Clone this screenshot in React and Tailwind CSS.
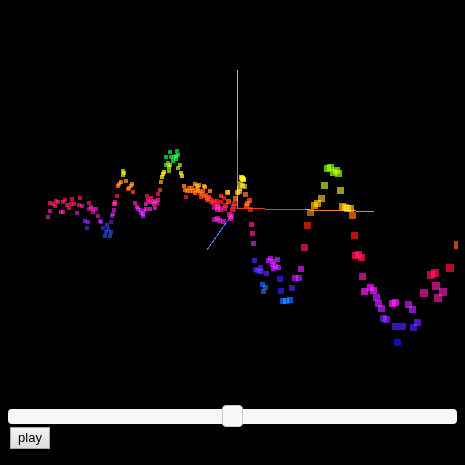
import { useState } from 'react';

// Each series: marker size, fill, and [x, y] centres on the 465 x 402 scene.
const series = [
  { size: 4, color: '#b81046', points: [[50,203],[53,204],[55,206],[56,201],[58,202],[63,202],[65,200],[67,205],[69,208],[72,199],[71,204],[74,204],[80,198],[79,205],[89,203]] },
  { size: 4, color: '#a8146e', points: [[50,211],[61,212],[63,212],[82,206],[91,207],[89,209],[93,209],[115,204]] },
  { size: 4, color: '#98148c', points: [[48,217],[77,213],[96,209],[93,212],[98,216],[114,210],[113,214]] },
  { size: 4, color: '#6418a8', points: [[85,221],[88,222],[100,221],[101,222],[112,216]] },
  { size: 4, color: '#361ca0', points: [[103,228],[111,222]] },
  { size: 4, color: '#1c2ca8', points: [[87,228],[107,225],[108,229],[106,232]] },
  { size: 4, color: '#153c9c', points: [[111,232],[105,236],[110,236]] },

  { size: 4, color: '#a0a414', points: [[123,171],[124,173],[123,175]] },
  { size: 4, color: '#b87414', points: [[126,181],[121,182],[132,184]] },
  { size: 4, color: '#c25a10', points: [[119,184],[118,186],[131,186],[129,188]] },
  { size: 4, color: '#c03410', points: [[128,189],[133,192],[160,190]] },
  { size: 4, color: '#b81438', points: [[117,196],[147,196],[158,194]] },
  { size: 4, color: '#c01468', points: [[115,202],[114,204],[148,200],[151,198],[150,202],[153,202],[155,201],[158,200],[157,203]] },
  { size: 4, color: '#b8149c', points: [[135,203],[146,204],[150,209],[146,209],[155,208],[154,204],[137,207]] },
  { size: 4, color: '#9016bc', points: [[138,209],[140,210],[141,213],[143,216],[143,214],[144,211]] },

  { size: 4, color: '#12a83a', points: [[170,152],[177,151],[166,157],[171,157]] },
  { size: 4, color: '#12b428', points: [[174,157],[176,156],[178,155],[176,159],[173,161]] },
  { size: 4, color: '#48a41a', points: [[166,165],[168,163]] },
  { size: 4, color: '#7ea814', points: [[169,167],[170,165],[180,165],[178,168],[169,171]] },
  { size: 4, color: '#bcba10', points: [[164,172],[163,174],[162,177],[181,173],[182,176]] },
  { size: 4, color: '#c27c10', points: [[161,182]] },

  { size: 4, color: '#c87410', points: [[184,186],[195,184],[197,186],[199,185],[204,186],[205,187],[210,191],[228,192]] },
  { size: 4, color: '#d85008', points: [[185,190],[187,191],[190,191],[192,188],[193,191],[195,193],[198,188],[198,191],[189,188],[196,190],[203,191]] },
  { size: 4, color: '#dc2c0c', points: [[200,193],[202,194],[204,196],[201,197],[206,195],[207,198],[209,197],[200,191],[221,196]] },
  { size: 4, color: '#d0141c', points: [[208,200],[211,199],[211,202],[214,201],[217,201],[217,204],[221,202],[207,200],[213,203]] },
  { size: 4, color: '#b81438', points: [[186,197],[224,198]] },
  { size: 5, color: '#b8105c', points: [[214,207],[217,209],[218,207],[220,209],[224,208],[217,206]] },
  { size: 5, color: '#a8109c', points: [[214,219],[217,218],[219,220],[223,221]] },

  { size: 5, color: '#cccc08', points: [[242,178],[241,177],[243,179]] },
  { size: 5, color: '#a88c10', points: [[240,183],[242,185],[244,186],[239,188]] },
  { size: 5, color: '#c88a08', points: [[237,192],[227,192],[239,191]] },
  { size: 5, color: '#b46010', points: [[245,194],[235,198]] },
  { size: 5, color: '#cc400c', points: [[249,200],[247,203],[246,205],[228,201]] },
  { size: 5, color: '#cc1420', points: [[250,209],[234,203],[233,206],[232,209],[225,205]] },
  { size: 5, color: '#b8106c', points: [[229,214],[231,216],[251,224],[252,233]] },
  { size: 5, color: '#9c12a4', points: [[230,218],[253,243]] },

  { size: 5, color: '#4c14a8', points: [[254,260],[260,267],[266,273]] },
  { size: 5, color: '#2814cc', points: [[255,269],[257,270],[259,271],[261,271]] },
  { size: 5, color: '#8c12c4', points: [[270,258],[268,260],[273,261],[277,259],[272,264],[275,266],[278,267],[273,268]] },
  { size: 5, color: '#104cac', points: [[262,284],[265,287],[263,291]] },
  { size: 6, color: '#2414b4', points: [[280,279],[281,291]] },
  { size: 6, color: '#4414a4', points: [[292,288]] },
  { size: 6, color: '#0a50d0', points: [[283,301],[286,301],[290,300]] },
  { size: 6, color: '#8412c0', points: [[295,278],[299,278]] },
  { size: 6, color: '#a012b0', points: [[301,269]] },

  { size: 7, color: '#b0104c', points: [[304,247]] },
  { size: 7, color: '#b41414', points: [[307,225],[354,235]] },
  { size: 7, color: '#b85410', points: [[310,212],[352,215]] },
  { size: 7, color: '#c47c08', points: [[314,205],[317,203],[342,206],[345,207],[347,208],[350,208]] },
  { size: 7, color: '#a08c14', points: [[321,198]] },
  { size: 7, color: '#94a012', points: [[324,185],[340,190]] },
  { size: 7, color: '#58b804', points: [[327,168],[330,167],[333,172],[336,170],[338,173]] },

  { size: 7, color: '#c80c38', points: [[355,255],[358,254],[361,257]] },
  { size: 7, color: '#ac1078', points: [[362,276]] },
  { size: 7, color: '#b810b8', points: [[364,291],[370,287],[373,290],[392,303],[395,302]] },
  { size: 7, color: '#8c12c0', points: [[376,297],[378,303],[381,308],[408,304],[412,309]] },
  { size: 7, color: '#5414b4', points: [[383,318],[386,319],[417,322]] },
  { size: 7, color: '#3814b0', points: [[395,326],[402,326],[413,327]] },
  { size: 7, color: '#1010ac', points: [[397,342]] },
  { size: 8, color: '#a81078', points: [[436,286],[443,292],[438,298],[424,293]] },
  { size: 8, color: '#b80c38', points: [[431,275],[435,273]] },
  { size: 8, color: '#b40c20', points: [[450,268]] },
];

function Scene() {
  return (
    <svg viewBox="0 0 465 402" className="block w-full" role="img" aria-label="3D particle plot">
      <g shapeRendering="crispEdges">
        <rect x="237" y="70" width="1" height="70" fill="#7ce04c" />
        <rect x="237" y="140" width="1" height="68" fill="#4cc824" />
        <path d="M237 208.4 L305 209.9" stroke="#e83c10" strokeWidth="1" />
        <path d="M305 209.9 L374 211.4" stroke="#f08418" strokeWidth="1" />
        <path d="M237 208 L226 223" stroke="#2828b0" strokeWidth="1" />
        <path d="M226 223 L207 250" stroke="#3880e0" strokeWidth="1" />
        {series.map(({ size, color, points }, s) => (
          <g key={s} fill={color}>
            {points.map(([x, y], i) => (
              <rect
                key={i}
                className="mix-blend-screen"
                x={x - Math.floor(size / 2)}
                y={y - Math.floor(size / 2)}
                width={size}
                height={size}
              />
            ))}
          </g>
        ))}
        <rect x="454" y="241" width="4" height="8" fill="#b44410" />
      </g>
    </svg>
  );
}

export default function App() {
  const [position, setPosition] = useState(50);
  const [playing, setPlaying] = useState(false);

  return (
    <main className="min-h-screen bg-black font-['Liberation_Sans',Arial,sans-serif]">
      <Scene />
      <div className="px-2 pt-1">
        <input
          type="range"
          min="0"
          max="100"
          value={position}
          aria-label="Position"
          onChange={(e) => setPosition(Number(e.target.value))}
          className="block h-[21px] w-full appearance-none bg-transparent [&::-webkit-slider-runnable-track]:h-[15px] [&::-webkit-slider-runnable-track]:rounded [&::-webkit-slider-runnable-track]:bg-[#f7f7f7] [&::-webkit-slider-thumb]:-mt-1 [&::-webkit-slider-thumb]:h-[22px] [&::-webkit-slider-thumb]:w-[21px] [&::-webkit-slider-thumb]:appearance-none [&::-webkit-slider-thumb]:rounded [&::-webkit-slider-thumb]:border [&::-webkit-slider-thumb]:border-[#c8c8c8] [&::-webkit-slider-thumb]:bg-[#f9f9f9]"
        />
        <button
          type="button"
          onClick={() => setPlaying(!playing)}
          className="mx-0.5 block h-[22px] w-10 border border-[#a8a8a8] bg-linear-to-b from-[#f4f4f4] to-[#dcdcdc] text-center text-[13px] leading-5 text-black"
        >
          {playing ? 'stop' : 'play'}
        </button>
      </div>
    </main>
  );
}
